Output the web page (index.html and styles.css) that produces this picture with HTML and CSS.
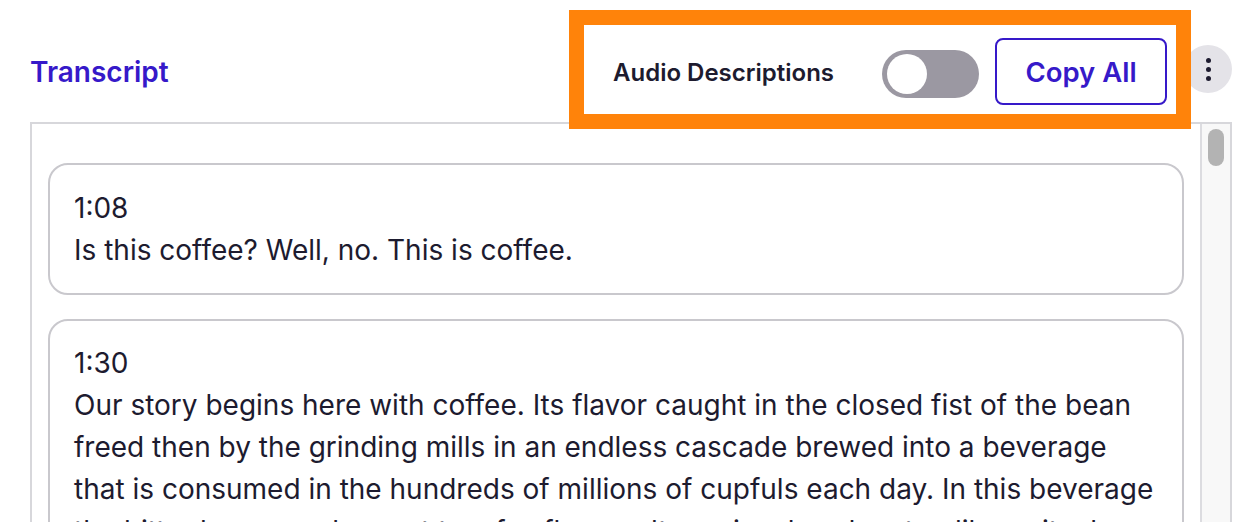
FILE: index.html
```html
<!DOCTYPE html>
<html lang="en">
<head>
<meta charset="utf-8">
<title>Transcript</title>
<link rel="stylesheet" href="styles.css">
</head>
<body>
<div class="page">
  <header class="header">
    <h2 class="title">Transcript</h2>
    <div class="controls">
      <span class="ad-label">Audio Descriptions</span>
      <span class="toggle" role="switch" aria-checked="false"><span class="knob"></span></span>
      <button class="copy-btn">Copy All</button>
    </div>
    <button class="kebab" aria-label="More options">
      <span class="dot"></span><span class="dot"></span><span class="dot"></span>
    </button>
  </header>
  <section class="panel">
    <div class="list">
      <div class="card">
        <div class="time">1:08</div>
        <p class="text">Is this coffee? Well, no. This is coffee.</p>
      </div>
      <div class="card">
        <div class="time">1:30</div>
        <p class="text">Our story begins here with coffee. Its flavor caught in the closed fist of the bean freed then by the grinding mills in an endless cascade brewed into a beverage that is consumed in the hundreds of millions of cupfuls each day. In this beverage the bitter bean reaches out to a far-flung cultures in a bond, not unlike a ritual.</p>
      </div>
    </div>
    <div class="scrollbar"><div class="thumb"></div></div>
  </section>
</div>
</body>
</html>
```
FILE: styles.css
```css
html, body {
  margin: 0;
  padding: 0;
  background: #ffffff;
  overflow: hidden;
}
body {
  font-family: Inter, "Noto Sans", "Liberation Sans", sans-serif;
  color: #1d1b2f;
}
.page {
  padding-left: 30px;
  width: 1202px;
}
.header {
  display: flex;
  align-items: center;
  height: 89px;
  margin-top: 25px;
  margin-bottom: 8px;
}
.title {
  margin: 0;
  flex: 1;
  font-size: 28px;
  font-weight: 600;
  color: #3619c9;
  padding-top: 4px;
}
.controls {
  position: relative;
  z-index: 1;
  display: flex;
  align-items: center;
  height: 89px;
  width: 592px;
  box-sizing: border-box;
  padding-left: 29px;
  padding-right: 9px;
  background: #fff;
  outline: 15px solid #ff830a;
}
.ad-label {
  font-size: 24px;
  font-weight: 600;
  color: #1d1b2f;
  padding-top: 6px;
}
.toggle {
  margin-left: auto;
  width: 97px;
  height: 48px;
  border-radius: 24px;
  background: #9b98a2;
  display: flex;
  align-items: center;
  padding-left: 5px;
  box-sizing: border-box;
  margin-top: 9px;
}
.knob {
  width: 40px;
  height: 40px;
  border-radius: 50%;
  background: #fff;
}
.copy-btn {
  margin-left: 16px;
  width: 172px;
  height: 67px;
  border: 2px solid #3619c9;
  border-radius: 8px;
  background: #fff;
  color: #3619c9;
  font-family: Inter, "Noto Sans", "Liberation Sans", sans-serif;
  font-size: 27.5px;
  font-weight: 600;
  margin-top: 4px;
  padding: 0;
}
.kebab {
  margin-left: 8px;
  width: 48px;
  height: 48px;
  border-radius: 50%;
  border: none;
  background: #e4e3e8;
  display: flex;
  flex-direction: column;
  align-items: center;
  justify-content: center;
  gap: 4px;
  padding: 0;
  margin-top: -1px;
}
.dot {
  width: 5px;
  height: 5px;
  border-radius: 50%;
  background: #1d1b2f;
}
.panel {
  display: flex;
  border: 2px solid #d7d7db;
  height: 500px;
  overflow: hidden;
}
.list {
  flex: 1;
  padding: 39px 16px 0 16px;
}
.card {
  border: 2px solid #c9c8cd;
  border-radius: 20px;
  padding: 22px 24px;
  margin-bottom: 24px;
}
.card + .card {
  padding-top: 21px;
}
.time, .text {
  font-size: 28px;
  line-height: 42px;
  margin: 0;
  color: #1d1b2f;
}
.scrollbar {
  width: 28px;
  background: #f8f8f8;
  border-left: 2px solid #dcdce0;
  display: flex;
  justify-content: center;
}
.thumb {
  margin-top: 5px;
  width: 16px;
  height: 37px;
  border-radius: 8px;
  background: #b3b3b3;
}
```
